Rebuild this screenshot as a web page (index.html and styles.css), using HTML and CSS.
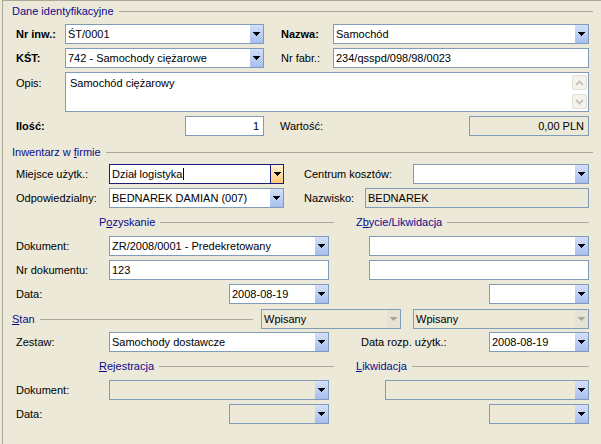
FILE: index.html
```html
<!DOCTYPE html>
<html lang="pl">
<head>
<meta charset="utf-8">
<title>Karta środka trwałego</title>
<link rel="stylesheet" href="styles.css">
</head>
<body>
<div class="frame">

  <div class="ghead g1h">
    <span class="gtitle">Dane identyfikacyjne</span><span class="gline"></span>
  </div>

  <div class="row m6">
    <span class="lbl b w49">Nr inw.:</span>
    <div class="combo w199"><span class="val">ŚT/0001</span><span class="btn"><svg class="arr" width="7" height="4" viewBox="0 0 7 4"><path d="M0 0h7v1h-1v1h-1v1h-1v1h-1v-1h-1v-1h-1v-1h-1z"/></svg></span></div>
    <span class="gap17"></span>
    <span class="lbl b w52">Nazwa:</span>
    <div class="combo w256"><span class="val">Samochód</span><span class="btn"><svg class="arr" width="7" height="4" viewBox="0 0 7 4"><path d="M0 0h7v1h-1v1h-1v1h-1v1h-1v-1h-1v-1h-1v-1h-1z"/></svg></span></div>
  </div>

  <div class="row m4">
    <span class="lbl b w49">KŚT:</span>
    <div class="combo w199"><span class="val">742 - Samochody ciężarowe</span><span class="btn"><svg class="arr" width="7" height="4" viewBox="0 0 7 4"><path d="M0 0h7v1h-1v1h-1v1h-1v1h-1v-1h-1v-1h-1v-1h-1z"/></svg></span></div>
    <span class="gap17"></span>
    <span class="lbl w52">Nr fabr.:</span>
    <div class="edit w256"><span class="val">234/qsspd/098/98/0023</span></div>
  </div>

  <div class="row top m4">
    <span class="lbl w49 opis">Opis:</span>
    <div class="memo">
      <div class="memotext">Samochód ciężarowy</div>
      <div class="vscroll">
        <span class="sbtn"><svg width="9" height="6" viewBox="0 0 9 6"><path d="M1 5 L4.5 1.5 L8 5" fill="none" stroke="#c8c5b6" stroke-width="2"/></svg></span>
        <span class="sbtn"><svg width="9" height="6" viewBox="0 0 9 6"><path d="M1 1 L4.5 4.5 L8 1" fill="none" stroke="#c8c5b6" stroke-width="2"/></svg></span>
      </div>
    </div>
  </div>

  <div class="row m4">
    <span class="lbl b w169">Ilość:</span>
    <div class="edit w79 right"><span class="val">1</span></div>
    <span class="gap16"></span>
    <span class="lbl w189">Wartość:</span>
    <div class="edit ro w120 right"><span class="val">0,00 PLN</span></div>
  </div>

  <div class="ghead g2h">
    <span class="gtitle">Inwentarz w <u>f</u>irmie</span><span class="gline"></span>
  </div>

  <div class="row m5">
    <span class="lbl w93">Miejsce użytk.:</span>
    <div class="combo focus w175"><span class="val">Dział logistyka<span class="caret"></span></span><span class="btn"><svg class="arr" width="7" height="4" viewBox="0 0 7 4"><path d="M0 0h7v1h-1v1h-1v1h-1v1h-1v-1h-1v-1h-1v-1h-1z"/></svg></span></div>
    <span class="gap20"></span>
    <span class="lbl w109">Centrum kosztów:</span>
    <div class="combo w176"><span class="val"></span><span class="btn"><svg class="arr" width="7" height="4" viewBox="0 0 7 4"><path d="M0 0h7v1h-1v1h-1v1h-1v1h-1v-1h-1v-1h-1v-1h-1z"/></svg></span></div>
  </div>

  <div class="row m4">
    <span class="lbl w93">Odpowiedzialny:</span>
    <div class="combo w175"><span class="val">BEDNAREK DAMIAN (007)</span><span class="btn"><svg class="arr" width="7" height="4" viewBox="0 0 7 4"><path d="M0 0h7v1h-1v1h-1v1h-1v1h-1v-1h-1v-1h-1v-1h-1z"/></svg></span></div>
    <span class="gap20"></span>
    <span class="lbl w61">Nazwisko:</span>
    <div class="edit ro w224"><span class="val">BEDNAREK</span></div>
  </div>

  <div class="subhead m8">
    <div class="sh left"><span class="gtitle">P<u>o</u>zyskanie</span><span class="gline"></span></div>
    <div class="sh right"><span class="gtitle">Z<u>b</u>ycie/Likwidacja</span><span class="gline"></span></div>
  </div>

  <div class="row m7">
    <span class="lbl w93">Dokument:</span>
    <div class="combo w220"><span class="val">ZR/2008/0001 - Predekretowany</span><span class="btn"><svg class="arr" width="7" height="4" viewBox="0 0 7 4"><path d="M0 0h7v1h-1v1h-1v1h-1v1h-1v-1h-1v-1h-1v-1h-1z"/></svg></span></div>
    <span class="gap40"></span>
    <div class="combo w220"><span class="val"></span><span class="btn"><svg class="arr" width="7" height="4" viewBox="0 0 7 4"><path d="M0 0h7v1h-1v1h-1v1h-1v1h-1v-1h-1v-1h-1v-1h-1z"/></svg></span></div>
  </div>

  <div class="row m4">
    <span class="lbl w93">Nr dokumentu:</span>
    <div class="edit w220"><span class="val">123</span></div>
    <span class="gap40"></span>
    <div class="edit w220"><span class="val"></span></div>
  </div>

  <div class="row m4">
    <span class="lbl w213">Data:</span>
    <div class="combo w100"><span class="val">2008-08-19</span><span class="btn"><svg class="arr" width="7" height="4" viewBox="0 0 7 4"><path d="M0 0h7v1h-1v1h-1v1h-1v1h-1v-1h-1v-1h-1v-1h-1z"/></svg></span></div>
    <span class="gap160"></span>
    <div class="combo w100"><span class="val"></span><span class="btn"><svg class="arr" width="7" height="4" viewBox="0 0 7 4"><path d="M0 0h7v1h-1v1h-1v1h-1v1h-1v-1h-1v-1h-1v-1h-1z"/></svg></span></div>
  </div>

  <div class="row stanrow m5">
    <div class="sh stan"><span class="gtitle"><u>S</u>tan</span><span class="gline"></span></div>
    <span class="gap8"></span>
    <div class="combo dis w140"><span class="val">Wpisany</span><span class="btn"><svg class="arr" width="7" height="4" viewBox="0 0 7 4"><path d="M0 0h7v1h-1v1h-1v1h-1v1h-1v-1h-1v-1h-1v-1h-1z"/></svg></span></div>
    <span class="gap12"></span>
    <div class="combo dis w176"><span class="val">Wpisany</span><span class="btn"><svg class="arr" width="7" height="4" viewBox="0 0 7 4"><path d="M0 0h7v1h-1v1h-1v1h-1v1h-1v-1h-1v-1h-1v-1h-1z"/></svg></span></div>
  </div>

  <div class="row m3">
    <span class="lbl w93">Zestaw:</span>
    <div class="combo w220"><span class="val">Samochody dostawcze</span><span class="btn"><svg class="arr" width="7" height="4" viewBox="0 0 7 4"><path d="M0 0h7v1h-1v1h-1v1h-1v1h-1v-1h-1v-1h-1v-1h-1z"/></svg></span></div>
    <span class="gap32"></span>
    <span class="lbl w128">Data rozp. użytk.:</span>
    <div class="combo w100"><span class="val">2008-08-19</span><span class="btn"><svg class="arr" width="7" height="4" viewBox="0 0 7 4"><path d="M0 0h7v1h-1v1h-1v1h-1v1h-1v-1h-1v-1h-1v-1h-1z"/></svg></span></div>
  </div>

  <div class="subhead m8">
    <div class="sh left"><span class="gtitle"><u>R</u>ejestracja</span><span class="gline"></span></div>
    <div class="sh right"><span class="gtitle"><u>L</u>ikwidacja</span><span class="gline"></span></div>
  </div>

  <div class="row m7">
    <span class="lbl w93">Dokument:</span>
    <div class="combo ro w220"><span class="val"></span><span class="btn"><svg class="arr" width="7" height="4" viewBox="0 0 7 4"><path d="M0 0h7v1h-1v1h-1v1h-1v1h-1v-1h-1v-1h-1v-1h-1z"/></svg></span></div>
    <span class="gap56"></span>
    <div class="combo ro w204"><span class="val"></span><span class="btn"><svg class="arr" width="7" height="4" viewBox="0 0 7 4"><path d="M0 0h7v1h-1v1h-1v1h-1v1h-1v-1h-1v-1h-1v-1h-1z"/></svg></span></div>
  </div>

  <div class="row m4">
    <span class="lbl w213">Data:</span>
    <div class="combo ro w100"><span class="val"></span><span class="btn"><svg class="arr" width="7" height="4" viewBox="0 0 7 4"><path d="M0 0h7v1h-1v1h-1v1h-1v1h-1v-1h-1v-1h-1v-1h-1z"/></svg></span></div>
    <span class="gap160"></span>
    <div class="combo ro w100"><span class="val"></span><span class="btn"><svg class="arr" width="7" height="4" viewBox="0 0 7 4"><path d="M0 0h7v1h-1v1h-1v1h-1v1h-1v-1h-1v-1h-1v-1h-1z"/></svg></span></div>
  </div>

</div>
</body>
</html>
```

FILE: styles.css
```css
* { box-sizing: border-box; }

html, body {
  margin: 0;
  padding: 0;
}

body {
  width: 601px;
  height: 444px;
  overflow: hidden;
  background: #ECE9D8;
  color: #000;
  font-family: "Liberation Sans", Arial, sans-serif;
  font-size: 11px;
  line-height: 13px;
}

.frame {
  margin-left: 2px;
  height: 444px;
  border-left: 1px solid #ACA899;
  border-top: 1px solid #ACA899;
}

/* group headers */
.ghead {
  display: flex;
  align-items: center;
  height: 13px;
  margin-left: 9px;
  width: 581px;
}
.g1h { margin-top: 4px; }
.g2h { margin-top: 10px; }

.gtitle {
  color: #0A0A8C;
  white-space: nowrap;
}
.gtitle u { text-decoration: underline; text-underline-offset: 1px; }

.gline {
  flex: 1;
  height: 1px;
  margin-left: 5px;
  background: #ACA899;
}

.subhead {
  display: flex;
  align-items: center;
  height: 13px;
  margin-left: 96px;
}
.sh {
  display: flex;
  align-items: center;
}
.sh.left { width: 235px; }
.sh.right { width: 233px; margin-left: 22px; }
.sh.stan { width: 241px; }

/* rows */
.row {
  display: flex;
  align-items: center;
  height: 20px;
  margin-left: 13px;
}
.row.top { align-items: flex-start; height: 40px; }
.row.stanrow { margin-left: 9px; }

.m3 { margin-top: 3px; }
.m4 { margin-top: 4px; }
.m5 { margin-top: 5px; }
.m6 { margin-top: 6px; }
.m7 { margin-top: 7px; }
.m8 { margin-top: 8px; }

.lbl { white-space: nowrap; flex: none; }
.lbl.b { font-weight: bold; }
.lbl.opis { padding-top: 5px; }

.w49 { width: 49px; }
.w52 { width: 52px; }
.w61 { width: 61px; }
.w79 { width: 79px; }
.w93 { width: 93px; }
.w100 { width: 100px; }
.w109 { width: 109px; }
.w120 { width: 120px; }
.w128 { width: 128px; }
.w140 { width: 140px; }
.w169 { width: 169px; }
.w175 { width: 175px; }
.w176 { width: 176px; }
.w189 { width: 189px; }
.w199 { width: 199px; }
.w204 { width: 204px; }
.w213 { width: 213px; }
.w220 { width: 220px; }
.w224 { width: 224px; }
.w256 { width: 256px; }

.gap8 { width: 8px; flex: none; }
.gap12 { width: 12px; flex: none; }
.gap16 { width: 16px; flex: none; }
.gap17 { width: 17px; flex: none; }
.gap20 { width: 20px; flex: none; }
.gap32 { width: 32px; flex: none; }
.gap40 { width: 40px; flex: none; }
.gap56 { width: 56px; flex: none; }
.gap160 { width: 160px; flex: none; }

/* controls */
.combo, .edit {
  display: flex;
  flex: none;
  height: 20px;
  border: 1px solid #7F9DB9;
  background: #fff;
}
.val {
  flex: 1;
  padding: 0 2px;
  line-height: 18px;
  white-space: nowrap;
  overflow: hidden;
}
.edit.right .val { text-align: right; padding-right: 4px; }
.edit.ro, .combo.ro, .combo.dis { background: #ECE9D8; }

.btn {
  flex: none;
  width: 13px;
  display: flex;
  align-items: center;
  justify-content: center;
  background: linear-gradient(#D5E0FA, #A6BEEE);
}
.arr { display: block; fill: #000; shape-rendering: crispEdges; }

.combo.dis .btn { background: #E6E3D5; }
.combo.dis .arr { fill: #ACA899; }

.combo.focus { border-color: #1C1C7A; }
.combo.focus .btn {
  border-left: 1px solid #1C1C7A;
  background: linear-gradient(#FFF3D8, #F8C878);
}

.caret {
  display: inline-block;
  width: 1px;
  height: 12px;
  margin-left: 1px;
  vertical-align: -2px;
  background: #000;
}

/* memo */
.memo {
  display: flex;
  width: 524px;
  height: 40px;
  border: 1px solid #7F9DB9;
  background: #fff;
}
.memotext {
  flex: 1;
  padding: 4px 4px;
}
.vscroll {
  flex: none;
  width: 17px;
  display: flex;
  flex-direction: column;
  justify-content: space-between;
  padding: 2px 1px;
}
.sbtn {
  width: 15px;
  height: 15px;
  border: 1px solid #E2E0D3;
  border-radius: 2px;
  background: #F4F3EE;
  display: flex;
  align-items: center;
  justify-content: center;
}
.sbtn svg { display: block; }
```
